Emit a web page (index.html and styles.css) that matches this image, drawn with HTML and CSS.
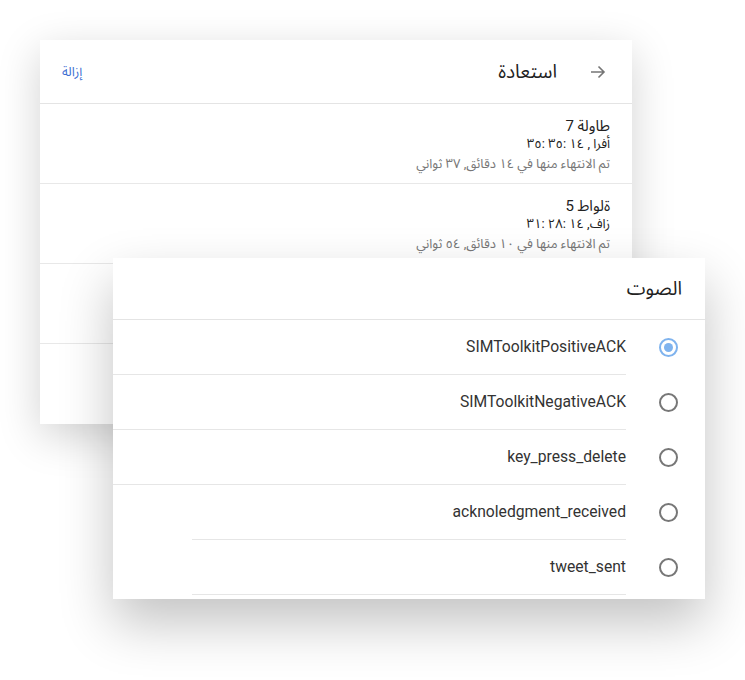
FILE: index.html
```html
<!DOCTYPE html>
<html lang="ar">
<head>
    <meta charset="UTF-8">
    <title>الصوت</title>
    <link rel="stylesheet" href="styles.css">
</head>
<body>
    <div class="stage">
        <div class="card history">
            <div class="history-head">
                <svg class="back" width="16" height="14" viewBox="0 0 16 14">
                    <path d="M1 7h13M8.5 1.5L14 7l-5.5 5.5" fill="none" stroke="#757575" stroke-width="1.6"/>
                </svg>
                <span class="history-title">استعادة</span>
                <a class="clear" href="#">إزالة</a>
            </div>
            <div class="history-row">
                <p class="row-title">طاولة 7</p>
                <p class="row-time">أفرا , ١٤ :٣٥ :٣٥</p>
                <p class="row-note">تم الانتهاء منها في ١٤ دقائق, ٣٧ ثواني</p>
            </div>
            <div class="history-row">
                <p class="row-title">ةلواط 5</p>
                <p class="row-time">زاف, ١٤ :٢٨ :٣١</p>
                <p class="row-note">تم الانتهاء منها في ١٠ دقائق, ٥٤ ثواني</p>
            </div>
            <div class="history-row"></div>
            <div class="history-row"></div>
        </div>

        <div class="card sound">
            <div class="sound-head">الصوت</div>
            <div class="option">
                <span class="radio checked"></span>
                <span class="option-name">SIMToolkitPositiveACK</span>
            </div>
            <div class="option">
                <span class="radio"></span>
                <span class="option-name">SIMToolkitNegativeACK</span>
            </div>
            <div class="option">
                <span class="radio"></span>
                <span class="option-name">key_press_delete</span>
            </div>
            <div class="option">
                <span class="radio"></span>
                <span class="option-name short">acknoledgment_received</span>
            </div>
            <div class="option">
                <span class="radio"></span>
                <span class="option-name short">tweet_sent</span>
            </div>
        </div>
    </div>
</body>
</html>
```

FILE: styles.css
```css
body {
    margin: 0;
    background: #ffffff;
    font-family: Roboto, "Noto Sans Arabic", "Noto Naskh Arabic", "Noto Sans", sans-serif;
    color: #222;
}
.stage {
    position: relative;
    height: 680px;
    padding: 40px 0 0 40px;
    box-sizing: border-box;
}
.card {
    background: #fff;
    width: 592px;
}
.history {
    box-shadow: 0 12px 40px rgba(0, 0, 0, 0.18);
}
.history-head {
    display: flex;
    direction: rtl;
    align-items: center;
    height: 63px;
    padding: 0 26px 0 22px;
    border-bottom: 1px solid #e4e4e4;
}
.history-title {
    font-size: 19px;
    margin-right: 33px;
    color: #222;
}
.clear {
    margin-right: auto;
    font-size: 13px;
    color: #3d6fd2;
    text-decoration: none;
}
.history-row {
    height: 80px;
    box-sizing: border-box;
    padding: 13px 22px 0 0;
    border-bottom: 1px solid #e8e8e8;
    text-align: right;
}
.history-row:last-child {
    border-bottom: none;
}
.history-row p {
    margin: 0;
}
.row-title {
    font-size: 15px;
    line-height: 18px;
    color: #222;
}
.row-time {
    font-size: 13px;
    line-height: 18px;
    color: #222;
}
.row-note {
    font-size: 13px;
    line-height: 22px;
    color: #777;
}
.sound {
    position: absolute;
    left: 113px;
    top: 258px;
    padding-bottom: 4px;
    box-shadow: 0 24px 50px rgba(0, 0, 0, 0.24);
}
.sound-head {
    direction: rtl;
    height: 62px;
    box-sizing: border-box;
    padding: 0 23px;
    line-height: 62px;
    font-size: 19px;
    border-bottom: 1px solid #e4e4e4;
}
.option {
    display: flex;
    direction: rtl;
    padding-right: 27px;
}
.radio {
    align-self: center;
    width: 19px;
    height: 19px;
    box-sizing: border-box;
    border: 2px solid #777;
    border-radius: 50%;
    flex-shrink: 0;
    display: flex;
    align-items: center;
    justify-content: center;
}
.radio.checked {
    border-color: #7fb3ee;
}
.radio.checked::before {
    content: "";
    width: 9px;
    height: 9px;
    border-radius: 50%;
    background: #7fb3ee;
}
.option-name {
    flex: 1;
    margin-right: 33px;
    line-height: 54px;
    font-size: 15.7px;
    color: #333;
    border-bottom: 1px solid #e6e6e6;
}
.option-name.short {
    margin-left: 79px;
}
```
